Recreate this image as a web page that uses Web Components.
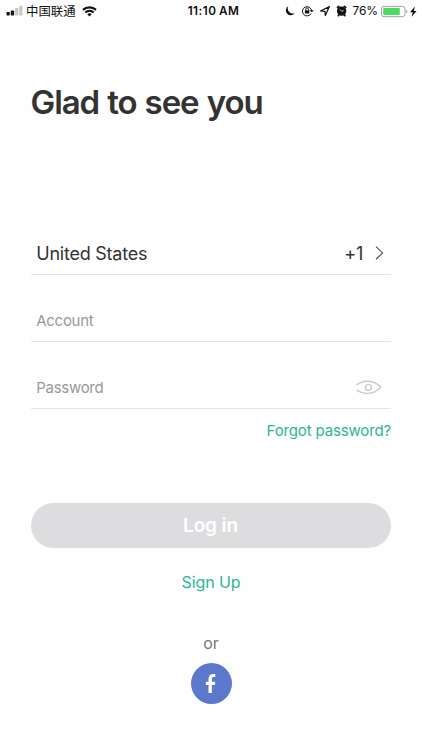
<!DOCTYPE html>
<html lang="en">
<head>
<meta charset="utf-8">
<meta name="viewport" content="width=device-width, initial-scale=1">
<title>Log in</title>
<style>
html, body { margin: 0; height: 100%; background: #fefefe; }
body { font-family: Inter, "Noto Sans CJK SC", sans-serif; color: #333; overflow: hidden; }
</style>
</head>
<body>
<login-screen></login-screen>
<script>
const define = (name, html) => customElements.define(name, class extends HTMLElement {
  constructor() {
    super();
    const t = document.createElement('template');
    t.innerHTML = html;
    this.attachShadow({ mode: 'open' }).append(t.content.cloneNode(true));
  }
});

define('status-bar', `
<style>
:host { display: grid; grid-template-columns: 1fr auto 1fr; align-items: center; height: 22px; padding: 0 4px 0 6px; color: #111; font-size: 12px; line-height: 22px; box-sizing: border-box; }
div { display: flex; align-items: center; }
svg { display: block; flex: none; }
.carrier { font: 12.4px/22px "Noto Sans CJK SC", sans-serif; margin: 0 6px 0 3px; }
.time { font-weight: 600; font-size: 11.8px; letter-spacing: .45px; word-spacing: -.8px; margin-left: 3px; }
.right { justify-content: flex-end; }
.pct { margin: 0 3px 0 5px; letter-spacing: -.1px; }
</style>
<div><svg width="17" height="12" viewBox="0 0 17 12"><rect x=".5" y="7" width="3.3" height="3.5" rx=".8" fill="#111"/><rect x="4.8" y="5.5" width="3.3" height="5" rx=".8" fill="#111"/><rect x="9" y="3" width="3.3" height="7.5" rx=".8" fill="#c9c9c9"/><rect x="13.2" y=".7" width="3.3" height="9.8" rx=".8" fill="#c9c9c9"/></svg>
<span class="carrier">中国联通</span>
<svg width="15" height="11" viewBox="0 0 15 11" fill="none" stroke="#111" stroke-width="2.2"><path d="M1 3.9a9.5 9.5 0 0 1 13 0M3.4 6.5a6 6 0 0 1 8.2 0"/><path d="M7.5 10.4 5.3 8.2a3.2 3.2 0 0 1 4.4 0z" fill="#111" stroke="none"/></svg></div>
<div class="time">11:10 AM</div>
<div class="right">
<svg width="64" height="14" viewBox="0 0 64 14">
<path d="M5.4 2.1A5 5 0 0 0 11.9 9 4.9 4.9 0 1 1 5.4 2.1z" fill="#111"/>
<g fill="none" stroke="#111"><path d="M28.1 9.4a4.6 4.6 0 1 1 .5-2.4M27 6.2l1.7 1.8 1.4-2" stroke-width="1"/><path d="M22.7 6.5V5.3a1.4 1.4 0 0 1 2.8 0v1.2" stroke-width=".9"/></g><rect x="21.9" y="6.2" width="4.4" height="3.2" rx=".4" fill="#111"/>
<path d="M37.5 7 46.4 2.6 42.3 11.4l-.3-4.1z" fill="none" stroke="#111" stroke-width="1.2" stroke-linejoin="round"/>
<circle cx="58.6" cy="7.1" r="4.7" fill="#111"/><path d="M54.5 3.5 55.9 2.4M61.3 2.4l1.4 1.1M55.9 10.9l-.6.7M61.3 10.9l.6.7" stroke="#111" stroke-width="1.7" stroke-linecap="round"/><path d="M56.8 5.4l1.9 1.9 1.9-.8" fill="none" stroke="#fff" stroke-width=".8"/>
</svg>
<span class="pct">76%</span>
<svg width="37" height="13" viewBox="0 0 37 13"><rect x=".5" y="1.3" width="23.5" height="10.4" rx="2.6" fill="#fff" stroke="#a2a2a2"/><rect x="2.2" y="3" width="16.6" height="7" rx="1" fill="#4cd964"/><path d="M25.3 4.8q2.4 1.7 0 3.4z" fill="#999"/><path d="M33.8 1.4 29 7.2h2.8l-1.2 4.6 5-5.9h-2.7z" fill="#111"/></svg>
</div>`);

define('form-row', `
<style>
:host { display: flex; align-items: center; justify-content: space-between; height: 67px; padding: 25.2px 7px 0 5.3px; box-sizing: border-box; border-bottom: 1px solid #e4e4e4; color: #999; font-size: 15px; line-height: 22px; letter-spacing: -.3px; }
:host([strong]) { color: #333; font-size: 18px; letter-spacing: -.24px; }
.end { display: flex; align-items: center; gap: 12px; }
</style>
<span><slot></slot></span><div class="end"><slot name="end"></slot></div>`);

define('chevron-icon', `<style>:host,svg{display:block}</style><svg width="9" height="15" viewBox="0 0 9 15"><path d="M1 .6l6.6 6.3L1 13.3" fill="none" stroke="#555" stroke-width="1.2"/></svg>`);
define('eye-icon', `<style>:host,svg{display:block}:host{margin-right:2px}</style><svg width="27" height="15" viewBox="0 0 27 15" fill="none" stroke="#ccc" stroke-width="1.4"><path d="M1.5 5C8 -.4 19-.4 25.8 7.3 19 15 8 15 1.5 9.8"/><circle cx="13.3" cy="7.4" r="3"/></svg>`);

define('pill-button', `
<style>:host{display:block}button{display:block;width:100%;height:45px;padding:0 1px 0 0;border:0;border-radius:23px;background:#dddddf;color:#fff;font:600 19px/45px Inter,sans-serif;letter-spacing:-.1px}</style>
<button><slot></slot></button>`);
define('text-link', `<style>:host{display:block;color:#2bb795;line-height:22px}</style><slot></slot>`);
define('facebook-button', `
<style>:host{display:block}button{display:block;width:41px;height:41px;padding:0;border:0;border-radius:50%;background:#5b78cb}svg{display:block}</style>
<button aria-label="Facebook"><svg width="41" height="41" viewBox="0 0 41 41"><path d="M17.5 30v-8.1h-2.7v-3.2h2.7v-2.6c0-3.4 1.7-5.2 4.6-5.2 1 0 1.7.1 2.2.2v2.9h-1.5c-1.4 0-1.9.8-1.9 1.9v2.8h3.4l-.4 3.2h-3V30z" fill="#fff"/></svg></button>`);

define('login-screen', `
<style>
:host { display: flex; flex-direction: column; height: 750px; width: 422px; }
main { display: flex; flex-direction: column; padding: 0 31px; }
h1 { margin: 60px 0 0; font-size: 33px; line-height: 40px; font-weight: 600; letter-spacing: -1.08px; word-spacing: .9px; text-indent: -.5px; }
.form { margin-top: 86px; }
.forgot { align-self: flex-end; margin-top: 10.6px; font-size: 15px; letter-spacing: -.15px; }
pill-button { margin-top: 61px; }
.signup { align-self: center; margin-top: 23.4px; font-size: 16px; letter-spacing: -.1px; }
.or { align-self: center; margin-top: 39px; font-size: 16px; line-height: 22px; color: #777; }
facebook-button { align-self: center; margin-top: 9px; }
</style>
<status-bar></status-bar>
<main>
<h1>Glad to see you</h1>
<div class="form">
<form-row strong>United States<span slot="end">+1</span><chevron-icon slot="end"></chevron-icon></form-row>
<form-row>Account</form-row>
<form-row>Password<eye-icon slot="end"></eye-icon></form-row>
</div>
<text-link class="forgot">Forgot password?</text-link>
<pill-button>Log in</pill-button>
<text-link class="signup">Sign Up</text-link>
<div class="or">or</div>
<facebook-button></facebook-button>
</main>`);
</script>
</body>
</html>
